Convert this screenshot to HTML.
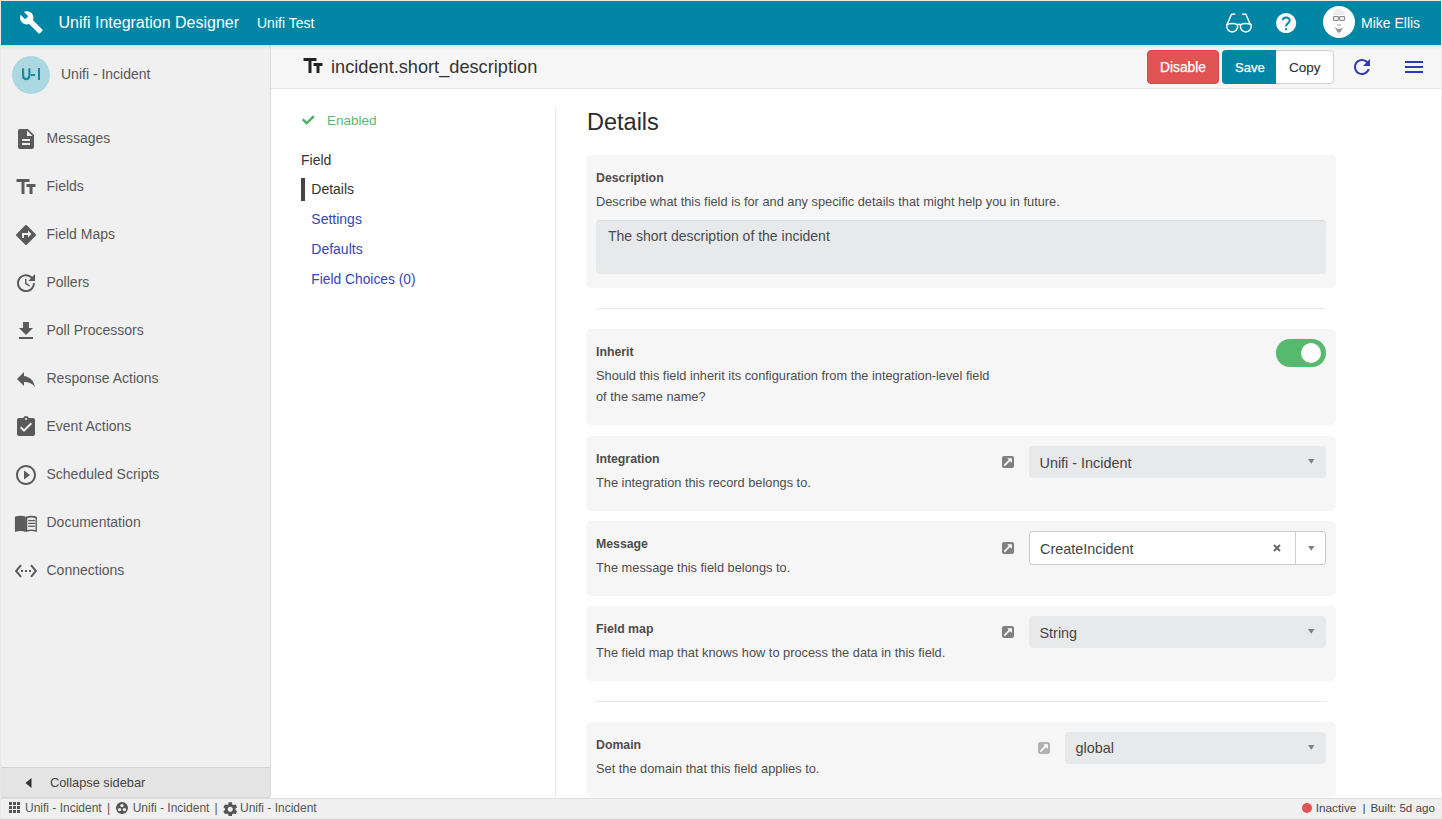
<!DOCTYPE html>
<html><head><meta charset="utf-8"><title>Unifi Integration Designer</title>
<style>
*{box-sizing:border-box;margin:0;padding:0}
html,body{width:1442px;height:819px;overflow:hidden;background:#fff;font-family:"Liberation Sans",sans-serif}
.a{position:absolute;white-space:nowrap;line-height:1}
svg{display:block}
</style></head><body>
<div style="position:absolute;left:0px;top:0px;width:1442px;height:819px;background:#e9e9e9;"></div>
<div style="position:absolute;left:1px;top:1px;width:1440px;height:817px;background:#ffffff;"></div>
<div style="position:absolute;left:1px;top:1px;width:1440px;height:44px;background:#0086a5;"></div>
<div style="position:absolute;left:1px;top:45px;width:269px;height:752px;background:#f0f0f0;"></div>
<div style="position:absolute;left:270px;top:45px;width:1px;height:752px;background:#dedede;"></div>
<div style="position:absolute;left:271px;top:45px;width:1170px;height:43px;background:#f6f6f6;"></div>
<div style="position:absolute;left:271px;top:88px;width:1170px;height:1px;background:#e6e6e6;"></div>
<div style="position:absolute;left:1px;top:45px;width:1440px;height:5px;background:linear-gradient(rgba(0,0,0,0.10),rgba(0,0,0,0.035) 40%,rgba(0,0,0,0));"></div>
<svg style="position:absolute;left:19px;top:10px;" width="24.7" height="24.7" viewBox="0 0 24 24" fill="#fff"><path d="M22.7 19l-9.1-9.1c.9-2.3.4-5-1.5-6.9-2-2-5-2.4-7.4-1.3L9 6 6 9 1.6 4.7C.4 7.1.9 10.1 2.9 12.1c1.9 1.9 4.6 2.4 6.9 1.5l9.1 9.1c.4.4 1 .4 1.4 0l2.3-2.3c.5-.4.5-1.1.1-1.4z"/></svg>
<div class="a" style="left:58.5px;top:15.00px;font-size:16px;color:#fff;font-weight:400;">Unifi Integration Designer</div>
<div class="a" style="left:257px;top:16.00px;font-size:14px;color:#fff;font-weight:400;">Unifi Test</div>
<svg style="position:absolute;left:1222px;top:10px;" width="34" height="26" viewBox="0 0 34 26" fill="#555"><g fill="none" stroke="#fff" stroke-width="1.5" stroke-linejoin="round" stroke-linecap="round"><path d="M4.8 14.6 C8 13.4 12.5 13.4 15.6 14.6 C16 19.5 13.5 21.9 10.2 21.9 C6.9 21.9 4.4 19.5 4.8 14.6Z"/><path d="M18.4 14.6 C21.5 13.4 26 13.4 29.2 14.6 C29.6 19.5 27.1 21.9 23.8 21.9 C20.5 21.9 18 19.5 18.4 14.6Z"/><path d="M15.6 14.6 Q17 14 18.4 14.6"/><path d="M5.2 14.3 L9.5 4.3 L12.7 4.3"/><path d="M28.2 14.3 L23.9 4.3 L20.7 4.3"/></g></svg>
<svg style="position:absolute;left:1276.4px;top:12.9px;" width="20.2" height="20.2" viewBox="0 0 20.2 20.2" fill="#555"><circle cx="10.1" cy="10.1" r="10.1" fill="#fff"/><path d="M6.8 7.3 C6.8 3.6 13.7 3.3 13.7 7.5 C13.7 10.1 10.1 10.6 10.1 13.6" fill="none" stroke="#0086a5" stroke-width="1.9"/><rect x="9.1" y="15.2" width="2" height="2" fill="#0086a5"/></svg>
<div style="position:absolute;left:1323px;top:6px;width:32px;height:32px;background:#fff;border-radius:50%"></div>
<svg style="position:absolute;left:1323px;top:6px;" width="32" height="32" viewBox="0 0 32 32" fill="#555"><path d="M10.2 9 C10.2 0.5 21.7 0.5 21.7 9Z" fill="#ececec"/><rect x="10.5" y="10.6" width="5" height="3.8" rx="0.8" fill="none" stroke="#8c8c8c" stroke-width="1.1"/><rect x="16.6" y="10.6" width="5" height="3.8" rx="0.8" fill="none" stroke="#8c8c8c" stroke-width="1.1"/><path d="M15.5 11.5 H16.6" stroke="#8c8c8c" stroke-width="1"/><rect x="14" y="18" width="4" height="2" fill="#cfcfcf"/><path d="M11.5 21 Q16 25 20.5 21 L18 25.5 L16 27 L14 25.5Z" fill="#9a9a9a"/><path d="M16 27 V31" stroke="#eee" stroke-width="1.5"/></svg>
<div class="a" style="left:1361px;top:16.00px;font-size:14px;color:#fff;font-weight:400;">Mike Ellis</div>
<div style="position:absolute;left:12px;top:56px;width:38px;height:38px;background:#acd9e1;border-radius:50%"></div>
<svg style="position:absolute;left:20px;top:66px;" width="14" height="16" viewBox="20 66 14 16" fill="#555"><path d="M23.1 68.3 V75.6 Q23.1 79.1 26.25 79.1 Q29.4 79.1 29.4 75.6 V68.3" fill="none" stroke="#1a86a3" stroke-width="2.1"/></svg>
<div style="position:absolute;left:31.4px;top:74.2px;width:3.8px;height:1.8px;background:#1a86a3;"></div>
<div style="position:absolute;left:37.6px;top:68.4px;width:2.2px;height:11.6px;background:#1a86a3;"></div>
<div class="a" style="left:61px;top:67.00px;font-size:14px;color:#555;font-weight:400;">Unifi - Incident</div>
<div class="a" style="left:46.5px;top:131.00px;font-size:14px;color:#585858;font-weight:400;">Messages</div>
<svg style="position:absolute;left:14px;top:127px;" width="24" height="24" viewBox="0 0 24 24" fill="#5a5a5a"><path d="M14 2H6c-1.1 0-1.99.9-1.99 2L4 20c0 1.1.89 2 1.99 2H18c1.1 0 2-.9 2-2V8l-6-6zm2 16H8v-2h8v2zm0-4H8v-2h8v2zm-3-5V3.5L18.5 9H13z"/></svg>
<div class="a" style="left:46.5px;top:179.00px;font-size:14px;color:#585858;font-weight:400;">Fields</div>
<svg style="position:absolute;left:14px;top:175px;" width="24" height="24" viewBox="0 0 24 24" fill="#5a5a5a"><path d="M2.5 4v3h5v12h3V7h5V4h-13zm19 5h-9v3h3v7h3v-7h3V9z"/></svg>
<div class="a" style="left:46.5px;top:227.00px;font-size:14px;color:#585858;font-weight:400;">Field Maps</div>
<svg style="position:absolute;left:14px;top:223px;" width="24" height="24" viewBox="0 0 24 24" fill="#5a5a5a"><path d="M21.71 11.29l-9-9c-.39-.39-1.02-.39-1.41 0l-9 9c-.39.39-.39 1.02 0 1.41l9 9c.39.39 1.02.39 1.41 0l9-9c.39-.38.39-1.01 0-1.41zM14 14.5V12h-4v3H8v-4c0-.55.45-1 1-1h5V7.5l3.5 3.5-3.5 3.5z"/></svg>
<div class="a" style="left:46.5px;top:275.00px;font-size:14px;color:#585858;font-weight:400;">Pollers</div>
<svg style="position:absolute;left:14px;top:271px;" width="24" height="24" viewBox="0 0 24 24" fill="#5a5a5a"><path d="M21 10.12h-6.78l2.74-2.82c-2.73-2.7-7.15-2.8-9.88-.1-2.73 2.71-2.73 7.08 0 9.79s7.15 2.71 9.88 0C18.32 15.65 19 14.08 19 12.1h2c0 1.98-.88 4.55-2.64 6.29-3.51 3.48-9.21 3.48-12.72 0-3.5-3.47-3.53-9.11-.02-12.58s9.14-3.47 12.65 0L21 3v7.12zM12.5 8v4.25l3.5 2.08-.72 1.21L11 13V8h1.5z"/></svg>
<div class="a" style="left:46.5px;top:323.00px;font-size:14px;color:#585858;font-weight:400;">Poll Processors</div>
<svg style="position:absolute;left:14px;top:319px;" width="24" height="24" viewBox="0 0 24 24" fill="#5a5a5a"><path d="M19 9h-4V3H9v6H5l7 7 7-7zM5 18v2h14v-2H5z"/></svg>
<div class="a" style="left:46.5px;top:371.00px;font-size:14px;color:#585858;font-weight:400;">Response Actions</div>
<svg style="position:absolute;left:14px;top:367px;" width="24" height="24" viewBox="0 0 24 24" fill="#5a5a5a"><path d="M10 9V5l-7 7 7 7v-4.1c5 0 8.5 1.6 11 5.1-1-5-4-10-11-11z"/></svg>
<div class="a" style="left:46.5px;top:419.00px;font-size:14px;color:#585858;font-weight:400;">Event Actions</div>
<svg style="position:absolute;left:14px;top:415px;" width="24" height="24" viewBox="0 0 24 24" fill="#5a5a5a"><path d="M19 3h-4.18C14.4 1.84 13.3 1 12 1c-1.3 0-2.4.84-2.82 2H5c-1.1 0-2 .9-2 2v14c0 1.1.9 2 2 2h14c1.1 0 2-.9 2-2V5c0-1.1-.9-2-2-2zm-7 0c.55 0 1 .45 1 1s-.45 1-1 1-1-.45-1-1 .45-1 1-1zm-2 14l-4-4 1.41-1.41L10 14.17l6.59-6.59L18 9l-8 8z"/></svg>
<div class="a" style="left:46.5px;top:467.00px;font-size:14px;color:#585858;font-weight:400;">Scheduled Scripts</div>
<svg style="position:absolute;left:14px;top:463px;" width="24" height="24" viewBox="0 0 24 24" fill="#5a5a5a"><path d="M10 16.5l6-4.5-6-4.5v9zM12 2C6.48 2 2 6.48 2 12s4.48 10 10 10 10-4.48 10-10S17.52 2 12 2zm0 18c-4.41 0-8-3.59-8-8s3.59-8 8-8 8 3.59 8 8-3.59 8-8 8z"/></svg>
<div class="a" style="left:46.5px;top:515.00px;font-size:14px;color:#585858;font-weight:400;">Documentation</div>
<svg style="position:absolute;left:14px;top:511px;" width="24" height="24" viewBox="0 0 24 24" fill="#5a5a5a"><g transform="translate(0.9 4.2) scale(1 1.02)"><path d="M0 1.6 Q5.5 -0.4 11 1.6 V16.4 Q5.5 14.6 0 16.4Z"/><path fill-rule="evenodd" d="M11 1.6 Q16.5 -0.4 22 1.6 V16.4 Q16.5 14.6 11 16.4Z M12.4 3 Q16.5 1.6 20.6 3 V14.6 Q16.5 13.4 12.4 14.6Z"/><rect x="13.3" y="4.6" width="6.7" height="1.3"/><rect x="13.3" y="7.4" width="6.7" height="1.3"/><rect x="13.3" y="10.2" width="6.7" height="1.3"/></g></svg>
<div class="a" style="left:46.5px;top:563.00px;font-size:14px;color:#585858;font-weight:400;">Connections</div>
<svg style="position:absolute;left:14px;top:559px;" width="24" height="24" viewBox="0 0 24 24" fill="#5a5a5a"><path d="M7.77 6.76L6.23 5.48.82 12l5.41 6.52 1.54-1.28L3.42 12l4.35-5.24zM7 13h2v-2H7v2zm10-2h-2v2h2v-2zm-6 2h2v-2h-2v2zm6.77-7.52l-1.54 1.28L20.58 12l-4.35 5.24 1.54 1.28L23.18 12l-5.41-6.52z"/></svg>
<div style="position:absolute;left:1px;top:767px;width:269px;height:1px;background:#d3d3d3;"></div>
<div style="position:absolute;left:1px;top:768px;width:269px;height:29px;background:#e4e4e4;"></div>
<div style="position:absolute;left:1px;top:797px;width:269px;height:1px;background:#d6d6d6;"></div>
<svg style="position:absolute;left:25px;top:778px;" width="7" height="10" viewBox="0 0 7 10" fill="#333"><path d="M6.5 0 V10 L0.5 5Z"/></svg>
<div class="a" style="left:50px;top:777.00px;font-size:12.8px;color:#444;font-weight:400;">Collapse sidebar</div>
<svg style="position:absolute;left:300.8px;top:53.8px;" width="24" height="24" viewBox="0 0 24 24" fill="#222"><path d="M2.5 4v3h5v12h3V7h5V4h-13zm19 5h-9v3h3v7h3v-7h3V9z"/></svg>
<div class="a" style="left:331px;top:58.00px;font-size:18.2px;color:#333;font-weight:400;">incident.short_description</div>
<div style="position:absolute;left:1147px;top:50px;width:72px;height:34px;background:#e05454;border-radius:4px;border:1px solid #dc4646;box-sizing:border-box"></div>
<div class="a" style="left:1160px;top:61.00px;font-size:13.8px;color:#fff;font-weight:400;-webkit-text-stroke:0.25px #fff">Disable</div>
<div style="position:absolute;left:1222px;top:50px;width:112px;height:34px;background:#fff;border:1px solid #cfcfcf;border-radius:4px;box-sizing:border-box"></div>
<div style="position:absolute;left:1222px;top:50px;width:54px;height:34px;background:#0086a5;border-radius:4px 0 0 4px"></div>
<div class="a" style="left:1235px;top:61.00px;font-size:13.1px;color:#fff;font-weight:400;-webkit-text-stroke:0.25px #fff">Save</div>
<div class="a" style="left:1289px;top:61.00px;font-size:13.5px;color:#333;font-weight:400;-webkit-text-stroke:0.15px #333">Copy</div>
<svg style="position:absolute;left:1349.5px;top:54.8px;" width="24" height="24" viewBox="0 0 24 24" fill="#2a3cb8"><path d="M17.65 6.35C16.2 4.9 14.21 4 12 4c-4.42 0-7.99 3.58-7.99 8s3.57 8 7.99 8c3.73 0 6.84-2.55 7.73-6h-2.08c-.82 2.33-3.04 4-5.65 4-3.31 0-6-2.69-6-6s2.69-6 6-6c1.66 0 3.14.69 4.22 1.78L13 11h7V4l-2.35 2.35z"/></svg>
<div style="position:absolute;left:1405px;top:61px;width:18px;height:2px;background:#2a3cb8;"></div>
<div style="position:absolute;left:1405px;top:66px;width:18px;height:2px;background:#2a3cb8;"></div>
<div style="position:absolute;left:1405px;top:71px;width:18px;height:2px;background:#2a3cb8;"></div>
<svg style="position:absolute;left:302px;top:115px;" width="12.5" height="10" viewBox="0 0 512 400" fill="#4cb264"><path d="M173.9 389.4L7.5 223c-10-10-10-26.2 0-36.2l36.2-36.2c10-10 26.2-10 36.2 0L192 262.7 432.1 22.6c10-10 26.2-10 36.2 0l36.2 36.2c10 10 10 26.2 0 36.2L210.1 389.4c-10 10-26.2 10-36.2 0z"/></svg>
<div class="a" style="left:327px;top:114.00px;font-size:13.5px;color:#5cb870;font-weight:400;">Enabled</div>
<div class="a" style="left:301px;top:153.00px;font-size:14px;color:#333;font-weight:400;">Field</div>
<div style="position:absolute;left:301px;top:178px;width:4px;height:23px;background:#444;"></div>
<div class="a" style="left:311.3px;top:182.00px;font-size:14px;color:#333;font-weight:400;">Details</div>
<div class="a" style="left:311.3px;top:212.00px;font-size:14px;color:#3546b6;font-weight:400;">Settings</div>
<div class="a" style="left:311.3px;top:242.00px;font-size:14px;color:#3546b6;font-weight:400;">Defaults</div>
<div class="a" style="left:311.3px;top:273.00px;font-size:13.8px;color:#3546b6;font-weight:400;">Field Choices (0)</div>
<div style="position:absolute;left:555px;top:108px;width:1px;height:689px;background:#e8e8e8;"></div>
<div class="a" style="left:587px;top:111.00px;font-size:23.5px;color:#2b2b2b;font-weight:400;">Details</div>
<div style="position:absolute;left:586px;top:155px;width:750px;height:133px;background:#f6f6f6;border-radius:5px"></div>
<div class="a" style="left:596px;top:172.00px;font-size:12.3px;color:#4d4d4d;font-weight:700;">Description</div>
<div class="a" style="left:596px;top:196.00px;font-size:12.8px;color:#4d4d4d;font-weight:400;">Describe what this field is for and any specific details that might help you in future.</div>
<div style="position:absolute;left:596px;top:220px;width:730px;height:54px;background:#e8e9ea;border-radius:4px;box-shadow:inset 0 1px 1px rgba(0,0,0,0.06)"></div>
<div class="a" style="left:608px;top:229.00px;font-size:14px;color:#4a4a4a;font-weight:400;">The short description of the incident</div>
<div style="position:absolute;left:596px;top:308px;width:730px;height:1px;background:#e8e8e8;"></div>
<div style="position:absolute;left:586px;top:329px;width:750px;height:96px;background:#f6f6f6;border-radius:5px"></div>
<div class="a" style="left:596px;top:346.00px;font-size:12.3px;color:#4d4d4d;font-weight:700;">Inherit</div>
<div class="a" style="left:596px;top:370.00px;font-size:12.8px;color:#4d4d4d;font-weight:400;">Should this field inherit its configuration from the integration-level field</div>
<div class="a" style="left:596px;top:391.00px;font-size:12.8px;color:#4d4d4d;font-weight:400;">of the same name?</div>
<div style="position:absolute;left:1276px;top:339px;width:50px;height:28px;background:#56b96e;border-radius:14px"></div>
<div style="position:absolute;left:1301px;top:343px;width:20px;height:20px;background:#fff;border-radius:50%"></div>
<div style="position:absolute;left:586px;top:436px;width:750px;height:74.5px;background:#f6f6f6;border-radius:5px"></div>
<div class="a" style="left:596px;top:453.00px;font-size:12.3px;color:#4d4d4d;font-weight:700;">Integration</div>
<div class="a" style="left:596px;top:477.00px;font-size:12.8px;color:#4d4d4d;font-weight:400;">The integration this record belongs to.</div>
<svg style="position:absolute;left:1002px;top:456px;" width="12" height="12" viewBox="0 0 12 12" fill="#555"><rect x="0" y="0" width="12" height="12" rx="2" fill="#808080"/><path d="M2.3 9.6 L8 3.9" stroke="#fff" stroke-width="1.6" fill="none"/><path d="M5.2 2.2 H9.9 V6.9Z" fill="#fff"/></svg>
<div style="position:absolute;left:1029px;top:446px;width:297px;height:32px;background:#e8e9ea;border-radius:4px"></div>
<div class="a" style="left:1039.5px;top:456.00px;font-size:14.4px;color:#444;font-weight:400;">Unifi - Incident</div>
<svg style="position:absolute;left:1308px;top:459.0px;" width="6.5" height="5" viewBox="0 0 6.5 5" fill="#808080"><path d="M0 0H6.5L3.25 4.8Z"/></svg>
<div style="position:absolute;left:586px;top:521px;width:750px;height:74.5px;background:#f6f6f6;border-radius:5px"></div>
<div class="a" style="left:596px;top:538.00px;font-size:12.3px;color:#4d4d4d;font-weight:700;">Message</div>
<div class="a" style="left:596px;top:562.00px;font-size:12.8px;color:#4d4d4d;font-weight:400;">The message this field belongs to.</div>
<svg style="position:absolute;left:1002px;top:542px;" width="12" height="12" viewBox="0 0 12 12" fill="#555"><rect x="0" y="0" width="12" height="12" rx="2" fill="#808080"/><path d="M2.3 9.6 L8 3.9" stroke="#fff" stroke-width="1.6" fill="none"/><path d="M5.2 2.2 H9.9 V6.9Z" fill="#fff"/></svg>
<div style="position:absolute;left:1029px;top:531px;width:297px;height:34px;background:#fff;border:1px solid #c8c8c8;border-radius:4px;box-sizing:border-box"></div>
<div style="position:absolute;left:1295px;top:532px;width:1px;height:32px;background:#cfcfcf;"></div>
<div class="a" style="left:1040px;top:542.00px;font-size:14.4px;color:#444;font-weight:400;">CreateIncident</div>
<svg style="position:absolute;left:1272.5px;top:544px;" width="8" height="8" viewBox="0 0 8 8" fill="#555"><path d="M1 1L7 7M7 1L1 7" stroke="#666" stroke-width="1.9"/></svg>
<svg style="position:absolute;left:1308px;top:546px;" width="6.5" height="5" viewBox="0 0 6.5 5" fill="#808080"><path d="M0 0H6.5L3.25 4.8Z"/></svg>
<div style="position:absolute;left:586px;top:606px;width:750px;height:74.5px;background:#f6f6f6;border-radius:5px"></div>
<div class="a" style="left:596px;top:623.00px;font-size:12.3px;color:#4d4d4d;font-weight:700;">Field map</div>
<div class="a" style="left:596px;top:647.00px;font-size:12.8px;color:#4d4d4d;font-weight:400;">The field map that knows how to process the data in this field.</div>
<svg style="position:absolute;left:1002px;top:626px;" width="12" height="12" viewBox="0 0 12 12" fill="#555"><rect x="0" y="0" width="12" height="12" rx="2" fill="#808080"/><path d="M2.3 9.6 L8 3.9" stroke="#fff" stroke-width="1.6" fill="none"/><path d="M5.2 2.2 H9.9 V6.9Z" fill="#fff"/></svg>
<div style="position:absolute;left:1029px;top:616px;width:297px;height:32px;background:#e8e9ea;border-radius:4px"></div>
<div class="a" style="left:1039.5px;top:626.00px;font-size:14.4px;color:#444;font-weight:400;">String</div>
<svg style="position:absolute;left:1308px;top:629.0px;" width="6.5" height="5" viewBox="0 0 6.5 5" fill="#808080"><path d="M0 0H6.5L3.25 4.8Z"/></svg>
<div style="position:absolute;left:596px;top:701px;width:730px;height:1px;background:#e8e8e8;"></div>
<div style="position:absolute;left:586px;top:722px;width:750px;height:74.5px;background:#f6f6f6;border-radius:5px"></div>
<div class="a" style="left:596px;top:739.00px;font-size:12.3px;color:#4d4d4d;font-weight:700;">Domain</div>
<div class="a" style="left:596px;top:763.00px;font-size:12.8px;color:#4d4d4d;font-weight:400;">Set the domain that this field applies to.</div>
<svg style="position:absolute;left:1038px;top:742px;" width="12" height="12" viewBox="0 0 12 12" fill="#555"><rect x="0" y="0" width="12" height="12" rx="2" fill="#b1b1b1"/><path d="M2.3 9.6 L8 3.9" stroke="#fff" stroke-width="1.6" fill="none"/><path d="M5.2 2.2 H9.9 V6.9Z" fill="#fff"/></svg>
<div style="position:absolute;left:1065px;top:732px;width:261px;height:32px;background:#e8e9ea;border-radius:4px"></div>
<div class="a" style="left:1075.5px;top:741.00px;font-size:14.4px;color:#444;font-weight:400;">global</div>
<svg style="position:absolute;left:1308px;top:745.0px;" width="6.5" height="5" viewBox="0 0 6.5 5" fill="#808080"><path d="M0 0H6.5L3.25 4.8Z"/></svg>
<div style="position:absolute;left:1px;top:798px;width:1440px;height:1px;background:#e0e0e0;"></div>
<div style="position:absolute;left:1px;top:799px;width:1440px;height:19px;background:#f0f0f0;"></div>
<svg style="position:absolute;left:9px;top:802px;" width="11" height="11" viewBox="0 0 11 11" fill="#555"><rect x="0" y="0" width="3" height="3"/><rect x="4" y="0" width="3" height="3"/><rect x="8" y="0" width="3" height="3"/><rect x="0" y="4" width="3" height="3"/><rect x="4" y="4" width="3" height="3"/><rect x="8" y="4" width="3" height="3"/><rect x="0" y="8" width="3" height="3"/><rect x="4" y="8" width="3" height="3"/><rect x="8" y="8" width="3" height="3"/></svg>
<div class="a" style="left:25px;top:802.00px;font-size:12px;color:#555;font-weight:400;">Unifi - Incident</div>
<div class="a" style="left:107px;top:802.00px;font-size:12px;color:#555;font-weight:400;">|</div>
<div style="position:absolute;left:116px;top:802px;width:12px;height:12px;background:#555;border-radius:50%"></div>
<svg style="position:absolute;left:116px;top:802px;" width="12" height="12" viewBox="0 0 12 12" fill="#f0f0f0"><circle cx="6" cy="3.6" r="1.7"/><circle cx="3.6" cy="7.6" r="1.7"/><circle cx="8.4" cy="7.6" r="1.7"/></svg>
<div class="a" style="left:132.7px;top:802.00px;font-size:12px;color:#555;font-weight:400;">Unifi - Incident</div>
<div class="a" style="left:214.5px;top:802.00px;font-size:12px;color:#555;font-weight:400;">|</div>
<svg style="position:absolute;left:222.5px;top:801.5px;" width="14.5" height="14.5" viewBox="2 2 20 20" fill="#555"><path d="M19.14 12.94c.04-.3.06-.61.06-.94 0-.32-.02-.64-.07-.94l2.03-1.58c.18-.14.23-.41.12-.61l-1.92-3.32c-.12-.22-.37-.29-.59-.22l-2.39.96c-.5-.38-1.03-.7-1.62-.94l-.36-2.54c-.04-.24-.24-.41-.48-.41h-3.84c-.24 0-.43.17-.47.41l-.36 2.54c-.59.24-1.13.57-1.62.94l-2.39-.96c-.22-.08-.47 0-.59.22L2.74 8.87c-.12.21-.08.47.12.61l2.03 1.58c-.05.3-.09.63-.09.94s.02.64.07.94l-2.03 1.58c-.18.14-.23.41-.12.61l1.92 3.32c.12.22.37.29.59.22l2.39-.96c.5.38 1.03.7 1.62.94l.36 2.54c.05.24.24.41.48.41h3.84c.24 0 .44-.17.47-.41l.36-2.54c.59-.24 1.13-.56 1.62-.94l2.39.96c.22.08.47 0 .59-.22l1.92-3.32c.12-.22.07-.47-.12-.61l-2.01-1.58zM12 15.6c-1.98 0-3.6-1.62-3.6-3.6s1.62-3.6 3.6-3.6 3.6 1.62 3.6 3.6-1.62 3.6-3.6 3.6z"/></svg>
<div class="a" style="left:240px;top:802.00px;font-size:12px;color:#555;font-weight:400;">Unifi - Incident</div>
<div style="position:absolute;left:1302px;top:803px;width:10px;height:10px;background:#e05353;border-radius:50%"></div>
<div class="a" style="left:1315.7px;top:803.00px;font-size:11.8px;color:#444;font-weight:400;">Inactive</div>
<div class="a" style="left:1362.5px;top:803.00px;font-size:11.8px;color:#444;font-weight:400;">|</div>
<div class="a" style="left:1370.4px;top:802.00px;font-size:11.6px;color:#444;font-weight:400;">Built: 5d ago</div>
</body></html>
